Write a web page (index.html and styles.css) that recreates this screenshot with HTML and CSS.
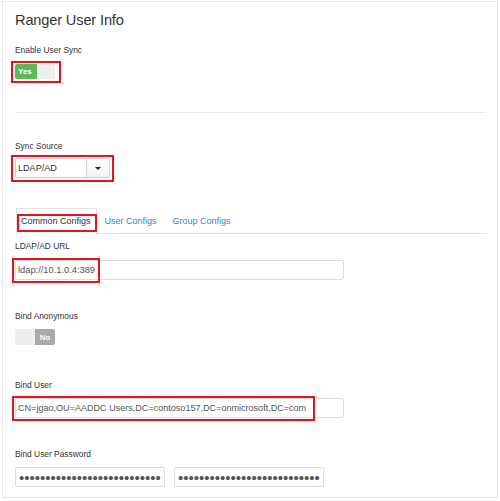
FILE: index.html
```html
<!DOCTYPE html>
<html>
<head>
<meta charset="utf-8">
<link rel="stylesheet" href="styles.css">
</head>
<body>
<div class="panel">
  <h2 class="title">Ranger User Info</h2>

  <div class="group g-enable">
    <div class="label">Enable User Sync</div>
    <div class="anchor">
      <div class="toggle on"><span class="knob-on">Yes</span><span class="knob-off"></span></div>
      <span class="mark mark-toggle"></span>
    </div>
  </div>

  <hr class="sep">

  <div class="group g-source">
    <div class="label">Sync Source</div>
    <div class="anchor">
      <div class="select">
        <span class="select-text">LDAP/AD</span>
        <span class="select-btn"><span class="caret"></span></span>
      </div>
      <span class="mark mark-select"></span>
    </div>
  </div>

  <div class="tabs">
    <div class="tab active">
      Common Configs
      <span class="mark mark-tab"></span>
    </div>
    <div class="tab">User Configs</div>
    <div class="tab">Group Configs</div>
  </div>

  <div class="group g-url">
    <div class="label">LDAP/AD URL</div>
    <div class="anchor">
      <input class="input wide" type="text" value="ldap://10.1.0.4:389">
      <span class="mark mark-url"></span>
    </div>
  </div>

  <div class="group g-anon">
    <div class="label">Bind Anonymous</div>
    <div class="toggle off"><span class="knob-off"></span><span class="knob-no">No</span></div>
  </div>

  <div class="group g-user">
    <div class="label">Bind User</div>
    <div class="anchor">
      <input class="input wide user-input" type="text" value="CN=jgao,OU=AADDC Users,DC=contoso157,DC=onmicrosoft,DC=com">
      <span class="mark mark-user"></span>
    </div>
  </div>

  <div class="group g-pass">
    <div class="label">Bind User Password</div>
    <div class="pass-row">
      <input class="input pass" type="password" value="aaaaaaaaaaaaaaaaaaaaaaaaaaaaaaaaaaaaaaaa">
      <input class="input pass" type="password" value="aaaaaaaaaaaaaaaaaaaaaaaaaaaaaaaaaaaaaaaa">
    </div>
  </div>
</div>
</body>
</html>
```

FILE: styles.css
```css
* { box-sizing: border-box; }
html, body { margin: 0; padding: 0; background: #fff; }
body {
  font-family: "Liberation Sans", Arial, sans-serif;
  color: #333;
}
.panel {
  margin: 1px 0 0 2px;
  width: 496px;
  height: 497px;
  border: 1px solid #e6e6e6;
  padding: 10px 11px 0 12px;
}
.title {
  margin: 0;
  font-size: 14.6px;
  line-height: 17px;
  font-weight: normal;
  letter-spacing: -0.15px;
  color: #333;
}
.label {
  font-size: 8.4px;
  line-height: 10px;
  color: #333;
}
.anchor { position: relative; display: inline-block; vertical-align: top; }
.mark {
  position: absolute;
  border: 2px solid #e2141d;
  pointer-events: none;
}
.group { display: block; }
.g-enable { margin-top: 16px; }
.g-enable .anchor { margin-top: 9px; }
.toggle {
  display: flex;
  width: 40px;
  height: 15px;
  border-radius: 2px;
  overflow: hidden;
  font-size: 8px;
  font-weight: bold;
  color: #fff;
}
.toggle span { flex: 1; display: flex; align-items: center; }
.knob-on { background: #5cb85c; padding-left: 3px; }
.knob-off { background: #eeeeee; }
.knob-no { background: #a9a9a9; justify-content: center; }
.mark-toggle { left: -4px; top: -3px; right: -6px; bottom: -4px; }

.sep {
  margin: 33px 0 0 0;
  border: 0;
  border-top: 1px solid #eaeaea;
  height: 0;
}
.g-source { margin-top: 28px; }
.g-source .anchor { margin-top: 7px; }
.select {
  display: flex;
  width: 95px;
  height: 20px;
  border: 1px solid #cfcfcf;
  border-radius: 2px;
  background: #fff;
  font-size: 9.1px;
  color: #333;
}
.select-text { flex: 1; display: flex; align-items: center; padding-left: 2px; }
.select-btn {
  width: 23px;
  border-left: 1px solid #d6d6d6;
  background: linear-gradient(#fff, #f2f2f2);
  display: flex; align-items: center; justify-content: center;
}
.caret {
  width: 0; height: 0;
  border-left: 3px solid transparent;
  border-right: 3px solid transparent;
  border-top: 3px solid #222;
}
.mark-select { left: -4px; top: -3px; right: -4px; bottom: -4px; }

.tabs {
  margin-top: 30px;
  display: flex;
  border-bottom: 1px solid #e2e2e2;
  height: 26px;
}
.tab {
  position: relative;
  font-size: 9px;
  color: #3487c6;
  padding: 0 7px;
  line-height: 24px;
  border: 1px solid transparent;
  border-bottom: 0;
}
.tab.active {
  color: #333;
  border-color: #e2e2e2;
  background: #fff;
  height: 26px;
  margin-left: 1px;
  padding: 0 5px 0 4px;
}
.mark-tab { left: 0px; top: 5px; right: -1px; bottom: 2px; }

.g-url { margin-top: 7px; }
.g-url .anchor, .g-user .anchor { margin-top: 9px; }
.input {
  display: block;
  height: 20px;
  border: 1px solid #dcdcdc;
  border-radius: 2px;
  padding: 0 2px;
  font-family: "Liberation Sans", Arial, sans-serif;
  font-size: 9.3px;
  color: #555;
  background: #fff;
  outline: none;
}
.user-input { font-size: 9.1px; letter-spacing: -0.02px; }
.wide { width: 329px; }
.mark-url { left: -3px; top: -2px; width: 88px; height: 25px; }
.mark-user { left: -3px; top: -2px; width: 303px; height: 25px; }

.g-anon { margin-top: 31px; }
.g-anon .toggle { margin-top: 8px; height: 16px; }

.g-user { margin-top: 35px; }
.g-user .anchor { margin-top: 8px; }

.g-pass { margin-top: 31px; }
.pass-row { display: flex; gap: 9px; margin-top: 8px; }
.pass {
  width: 150px;
  font-size: 15px;
  letter-spacing: 0;
  padding: 0 3px;
  color: #555;
}
```
